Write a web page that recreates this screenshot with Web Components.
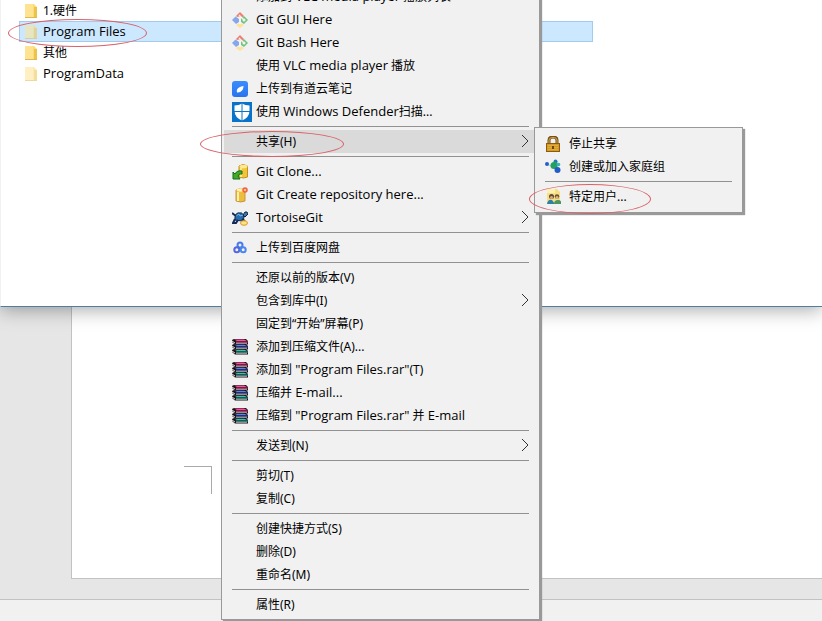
<!DOCTYPE html>
<html lang="zh-CN">
<head>
<meta charset="utf-8">
<title>共享菜单</title>
<style>
html,body{margin:0;height:100%;overflow:hidden}
body{font:12px/23px "Noto Sans","Noto Sans CJK SC",sans-serif;color:#000}
</style>
</head>
<body>
<share-desktop></share-desktop>
<script>
const book = (y,light,dark) => `<path d="M0 ${y+1}l2-1h12l2 2v3.500H3L0 ${y+3}z" fill="#1c1218"/><path d="M2 ${y+.5}h10l3 1.500H5z" fill="${light}"/><path d="M4 ${y+2.300}h12v1.400H4z" fill="${dark}"/><path d="M4 ${y+3.700}h11v1H4z" fill="#c9c4c6"/><path d="M0 ${y+1.500}l3 2v1L0 ${y+2.800}z" fill="#d8d3d0"/>`;
const ICONS = {
 folder:`<path d="M1 1h9l3 3v11H1z" fill="#fbdc78"/><path d="M1 1h8v14H1z" fill="#ffe391"/><path d="M10 4h3v11h-3z" fill="#edc44b"/><path d="M1 14.5h12" stroke="#dfb94f"/>`,
 git:`<path d="M8 0l4 4-2.500 2.500L7 4.500 5 5 4 4z" fill="#ee7f70"/><path d="M12 4l4 4-4 4-3-2V7z" fill="#72c47f"/><path d="M3.500 4.500L7 7v3l-3 2-4-4z" fill="#86a8ea"/><path d="M8 10.500l4 2.500-4 3-4-3z" fill="#ffe29a"/><path d="M7 3l5 5M8 4v8" stroke="#f5f5f5" stroke-width="1.3"/><circle cx="8" cy="11" r="1.3" fill="#f5f5f5"/><circle cx="12" cy="8" r="1.5" fill="#f5f5f5"/>`,
 note:`<defs><linearGradient id="n" x2="0" y2="1"><stop stop-color="#3b8cff"/><stop offset="1" stop-color="#2874ed"/></linearGradient></defs><rect width="16" height="16" rx="3" fill="url(#n)"/><path d="M5 11.500q-1-3 2-5Q9 5 11.500 5q0 2.500-1 4Q8 12 5 11.500z" fill="#fff"/>`,
 shield:`<path d="M0 0h20v20H0z" fill="#0873c8"/><path d="M10 1.500q3 2 7.500 2v5q0 7-7.500 10-7.500-3-7.500-10v-5q4.500 0 7.500-2z" fill="#fff"/><path d="M10 1v18M2 9.500h16" stroke="#0873c8"/>`,
 clone:`<path d="M7 2q4-3 8.500 0v11q-4 2-8.500 0z" fill="#f0c53a" stroke="#c2901d"/><ellipse cx="11.500" cy="2.500" rx="4" ry="1.800" fill="#ffe98f"/><path d="M9 4v9" stroke="#fff0a8" stroke-width="1.500"/><path d="M1 8l2 2q2-4 7-3v3Q7 9 6 12l2 3H1z" fill="#3cad29" stroke="#176d16"/>`,
 create:`<path d="M4 3q4-3 9 0v11q-4 2-9 0z" fill="#edbd3e" stroke="#c9963a"/><ellipse cx="8.500" cy="3" rx="4" ry="1.700" fill="#ffefad"/><path d="M6 5v9" stroke="#fff0a8" stroke-width="2"/><circle cx="13" cy="3" r="2" fill="#ffbd99" stroke="#ef603e" stroke-width="1.500"/>`,
 tortoise:`<path d="M3 7Q4 2 8 3q3-1 4 5l-2 3-7-1z" fill="#286cad" stroke="#132550"/><path d="M4 6l3-2 1 2 3-1" stroke="#70b8e5"/><path d="M11 5l2-3h2l1 2-3 3z" fill="#3b78ad" stroke="#122345"/><path d="M0 3l4 3M3 9l-2 4h3l2-3M10 9l3 2" stroke="#142b58" stroke-width="2"/><ellipse cx="12" cy="13" rx="3.500" ry="2.300" fill="#ffe083" stroke="#d69c28"/>`,
 baidu:`<g fill="none" stroke-width="2"><circle cx="8" cy="5" r="2.500" stroke="#477de9"/><circle cx="4.800" cy="9.800" r="2.500" stroke="#5367df"/><circle cx="11.200" cy="9.800" r="2.500" stroke="#4a86ee"/></g>`,
 rar:book(10,'#3fbfa8','#0b8274')+book(5,'#5a83e0','#2a3a9c')+book(0,'#f0559a','#a81b5c'),
 lock:`<path d="M4 8V4q0-3 4-3t4 3v4" fill="none" stroke="#765019" stroke-width="3"/><path d="M4 8V4q0-2.500 4-2.500T12 4v4" fill="none" stroke="#d6ab50"/><rect x="1.500" y="7.500" width="13" height="8" fill="#d79b25" stroke="#8a5c12"/><path d="M3 9.500h10M3 11.500h10M3 13.500h10" stroke="#e2ad40"/><path d="M8 10v3" stroke="#714611" stroke-width="2"/>`,
 group:`<path d="M2 5l7 3 3-6 1 9-4-2z" stroke="#b4dbe2" fill="#a4d6dd"/><circle cx="2" cy="5" r="2" fill="#285dcd"/><circle cx="10.500" cy="2.500" r="2" fill="#247cbb"/><circle cx="9" cy="6.500" r="3.500" fill="#22a25d"/><circle cx="12.500" cy="11" r="3" fill="#245cc7"/><circle cx="13.500" cy="5.500" r="1.800" fill="#39b2b3"/>`,
 users:`<path d="M2 0h10l3 3v12H2z" fill="#f8df85"/><path d="M2 0h8v4H2z" fill="#fff0b0"/><circle cx="6.500" cy="7.500" r="2.500" fill="#5b4934"/><circle cx="12" cy="7.500" r="2.300" fill="#695134"/><circle cx="6.500" cy="8.500" r="1.600" fill="#d6a880"/><circle cx="12" cy="8.500" r="1.500" fill="#ddb28c"/><path d="M2 15q1-5 5-4l3 4z" fill="#327fa6"/><path d="M9 15q0-4 4-4t3 4z" fill="#4b9562"/>`
};
function define(name, html, setup){
  const t=document.createElement('template'); t.innerHTML=html;
  customElements.define(name, class extends HTMLElement{
    connectedCallback(){
      if(this.shadowRoot) return;
      this.attachShadow({mode:'open'}).append(t.content.cloneNode(true));
      if(setup) setup(this,this.shadowRoot);
    }
  });
}
customElements.define('ui-icon', class extends HTMLElement{
  static observedAttributes=['name'];
  constructor(){
    super();
    this.attachShadow({mode:'open'}).innerHTML=`<style>:host{display:block;width:16px;height:16px}svg{display:block;width:100%;height:100%}:host([name=shield]){width:20px;height:20px}</style><svg aria-hidden="true" fill="none"></svg>`;
  }
  attributeChangedCallback(attr,old,name){
    const s=this.shadowRoot.querySelector('svg');
    s.setAttribute('viewBox',name==='shield'?'0 0 20 20':'0 0 16 16');
    s.innerHTML=ICONS[name]||'';
  }
});
define('file-row',`<style>:host{display:block}button{all:unset;box-sizing:border-box;display:flex;align-items:center;gap:3px;width:100%;height:21px;padding-left:4px;border:1px solid transparent;white-space:nowrap}
:host([selected]) button{background:#cce8ff;border-color:#a2cbed}:host([faded]) ui-icon{opacity:.55}:host([latin]){font-family:"Open Sans",sans-serif;font-size:13px}</style><button type="button"><ui-icon name="folder"></ui-icon><span><slot></slot></span></button>`);
define('menu-item',`<style>:host{display:block}button{all:unset;box-sizing:border-box;display:grid;grid-template-columns:24px 1fr auto;align-items:center;width:100%;height:23px;padding:0 8px;white-space:nowrap}
:host([active]) button{background:#dadada}:host([latin]){font-family:"Open Sans",sans-serif;font-size:13px}svg{display:none;width:8px;height:16px}:host([more]) svg{display:block}</style>
<button type="button" role="menuitem"><ui-icon></ui-icon><span><slot></slot></span><svg viewBox="0 0 8 16" aria-hidden="true"><path d="M1 1l6 6-6 6" fill="none" stroke="#333"/></svg></button>`,(h,r)=>{
  r.querySelector('ui-icon').setAttribute('name',h.getAttribute('icon')||'');
  if(h.hasAttribute('more')) r.querySelector('button').setAttribute('aria-haspopup','menu');
});
define('context-menu',`<style>:host{display:block;box-sizing:border-box;background:#f1f1f1;border:1px solid #999;padding:3px 2px;box-shadow:2px 2px 1px #999}
::slotted(hr){height:1px;border:0;background:#919191;margin:3px 8px}</style><slot></slot>`,h=>h.setAttribute('role','menu'));
define('word-window',`<style>:host{display:flex;flex-direction:column;height:100%;background:#e6e6e6}main{flex:1;display:flex;padding:0 0 20px 71px}
.paper{flex:1;background:#fff;border:1px solid #c2c2c2;border-width:0 0 1px 1px;display:flex;align-items:flex-end}
.corner{width:27px;height:27px;border:1px solid #aaa;border-width:1px 1px 0 0;margin:0 0 84px 112px}
footer{height:21px;border-top:1px solid #c2c2c2;background:#f1f1f1}</style><main><div class="paper"><div class="corner"></div></div></main><footer></footer>`);
define('explorer-window',`<style>:host{display:block;box-sizing:border-box;height:307px;background:#fff;border-bottom:1px solid #4f7ea4;border-left:1px solid #f1f1f1;box-shadow:0 3px 18px rgba(0,0,0,.34)}
nav{width:574px;max-width:calc(100% - 18px);margin-left:18px}</style><nav><slot></slot></nav>`);
define('red-mark',`<style>:host{display:block;box-sizing:border-box;border:1px solid #db6067;border-radius:50%;pointer-events:none}</style>`);
define('share-desktop',`<style>:host{display:block;position:relative;height:100vh;overflow:hidden}
explorer-window{position:absolute;inset:0 0 auto 0}
.main,.sub,red-mark{position:absolute}.main{left:221px;top:-19px;width:319px}.sub{left:534px;top:127px;width:209px;padding:4px 2px}
.en{font-family:"Open Sans",sans-serif;font-size:13px}
.m1{left:8px;top:19px;width:139px;height:28px}.m2{left:200px;top:131px;width:144px;height:26px}.m3{left:529px;top:184px;width:122px;height:30px}
</style>
<word-window></word-window>
<explorer-window><file-row>1.硬件</file-row><file-row selected faded latin>Program Files</file-row><file-row>其他</file-row><file-row faded latin>ProgramData</file-row></explorer-window>
<context-menu class="main">
<menu-item>添加到 <span class="en">VLC media player</span> 播放列表</menu-item>
<menu-item icon="git" latin>Git GUI Here</menu-item>
<menu-item icon="git" latin>Git Bash Here</menu-item>
<menu-item>使用 <span class="en">VLC media player</span> 播放</menu-item>
<menu-item icon="note">上传到有道云笔记</menu-item>
<menu-item icon="shield">使用 <span class="en">Windows Defender</span>扫描...</menu-item><hr>
<menu-item active more>共享(H)</menu-item><hr>
<menu-item icon="clone" latin>Git Clone...</menu-item>
<menu-item icon="create" latin>Git Create repository here...</menu-item>
<menu-item icon="tortoise" latin more>TortoiseGit</menu-item><hr>
<menu-item icon="baidu">上传到百度网盘</menu-item><hr>
<menu-item>还原以前的版本(V)</menu-item>
<menu-item more>包含到库中(I)</menu-item>
<menu-item>固定到“开始”屏幕(P)</menu-item>
<menu-item icon="rar">添加到压缩文件(A)...</menu-item>
<menu-item icon="rar">添加到 <span class="en">"Program Files.rar"</span>(T)</menu-item>
<menu-item icon="rar">压缩并 <span class="en">E-mail...</span></menu-item>
<menu-item icon="rar">压缩到 <span class="en">"Program Files.rar"</span> 并 <span class="en">E-mail</span></menu-item><hr>
<menu-item more>发送到(N)</menu-item><hr>
<menu-item>剪切(T)</menu-item>
<menu-item>复制(C)</menu-item><hr>
<menu-item>创建快捷方式(S)</menu-item>
<menu-item>删除(D)</menu-item>
<menu-item>重命名(M)</menu-item><hr>
<menu-item>属性(R)</menu-item>
</context-menu>
<context-menu class="sub"><menu-item icon="lock">停止共享</menu-item><menu-item icon="group">创建或加入家庭组</menu-item><hr><menu-item icon="users">特定用户...</menu-item></context-menu>
<red-mark class="m1"></red-mark><red-mark class="m2"></red-mark><red-mark class="m3"></red-mark>`);
</script>
</body>
</html>
